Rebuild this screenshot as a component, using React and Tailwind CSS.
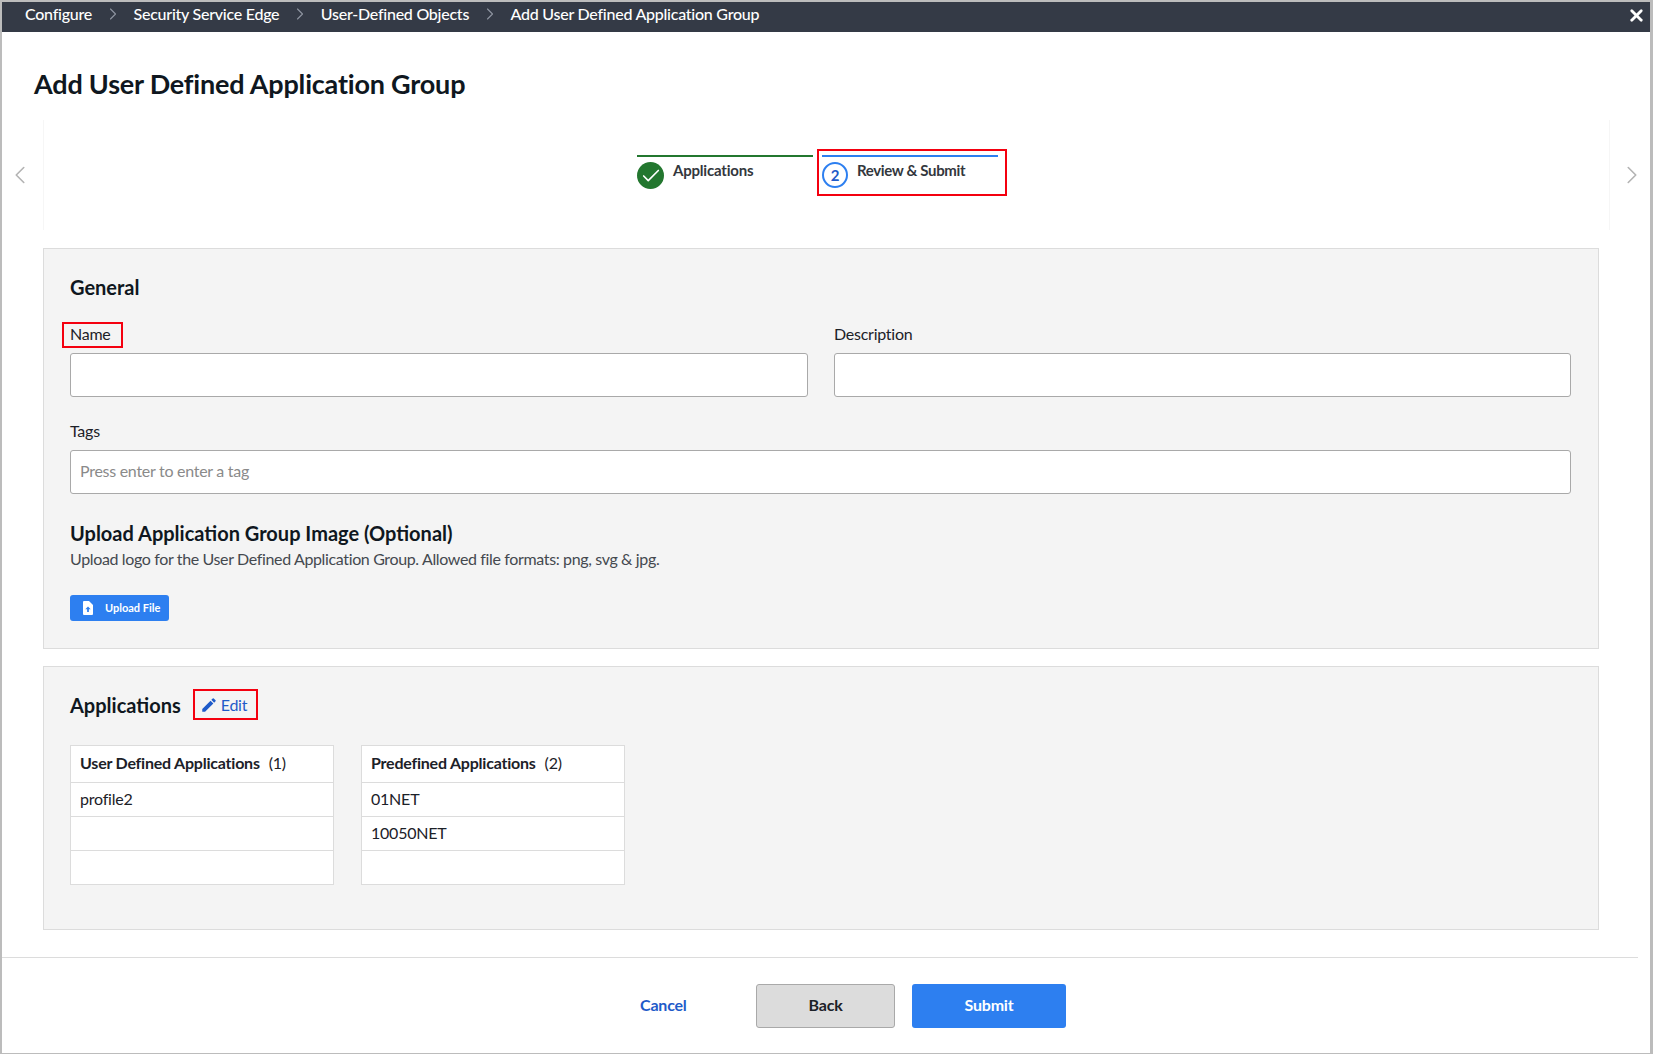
import { X, ChevronLeft, ChevronRight, Check } from "lucide-react";
import { MdEdit } from "react-icons/md";

const crumbs = ["Configure", "Security Service Edge", "User-Defined Objects", "Add User Defined Application Group"];

function Field({ label, placeholder, className = "" }) {
  return (
    <div className={className}>
      <label className="block text-[16px] leading-5 tracking-[-0.25px] text-[#1c2128]">{label}</label>
      <div className="mt-[9px] h-[44px] rounded-[3px] border border-[#a9a9a9] bg-white px-[9px] text-[16px] leading-[40px] tracking-[-0.28px] text-[#8a8a8a]">
        {placeholder}
      </div>
    </div>
  );
}

function AppTable({ title, count, rows }) {
  return (
    <div className="w-[264px] border border-[#dcdcdc] bg-white text-[16px] tracking-[-0.22px] text-[#1c2128]">
      <div className="flex h-[36px] items-center gap-[9px] px-[9px] pb-[2px]">
        <span className="font-bold">{title}</span>
        <span>({count})</span>
      </div>
      {rows.map((row, i) => (
        <div key={i} className="flex h-[34px] items-center border-t border-[#dcdcdc] px-[9px] pb-[2px]">
          {row}
        </div>
      ))}
    </div>
  );
}

export default function App() {
  return (
    <div className="flex h-[1054px] w-[1653px] flex-col overflow-hidden border-t-2 border-r-[3px] border-b border-l-2 border-[#bcbcbc] bg-white font-['Lato',sans-serif]">
      {/* top bar */}
      <div className="flex h-[30px] shrink-0 items-center bg-[#343a46] pr-[4px] pb-[7px] pl-[23px] text-[16px] font-medium tracking-[-0.25px] text-white">
        {crumbs.map((c, i) => (
          <div key={c} className="flex items-center">
            <span>{c}</span>
            {i < crumbs.length - 1 && <ChevronRight className="mx-[10.75px] h-[20px] w-[20px] text-[#8f95a0]" strokeWidth={1.3} />}
          </div>
        ))}
        <X className="mt-[3px] ml-auto h-[19px] w-[19px]" strokeWidth={3.5} />
      </div>

      <h1 className="mt-[34px] ml-[32px] h-[36px] text-[27px] leading-9 font-bold tracking-[-0.2px] text-[#0f1720]">Add User Defined Application Group</h1>

      {/* stepper */}
      <div className="mt-[18px] flex h-[110px]">
        <div className="flex w-[41px] shrink-0 items-center justify-center pr-[5px] text-[#b4b4b4]">
          <ChevronLeft className="h-[30px] w-[30px] shrink-0" strokeWidth={1.3} />
        </div>
        <div className="flex w-[1567px] shrink-0 gap-[9px] border-x border-[#f6f6f6] pt-[35px] pl-[593px]">
          <div className="w-[176px] border-t-2 border-[#23772f]">
            <div className="mt-[5px] flex gap-[9px]">
              <div className="flex h-[27px] w-[27px] items-center justify-center rounded-full bg-[#23772f]">
                <Check className="h-[22px] w-[22px] text-white" strokeWidth={1.8} />
              </div>
              <span className="-mt-px text-[15px] leading-[18px] font-bold tracking-[-0.2px] text-[#33373d]">Applications</span>
            </div>
          </div>
          <div className="relative w-[176px] border-t-2 border-[#2d7ff0]">
            <div className="absolute -top-[8px] -right-[9px] -left-[5px] h-[47px] border-2 border-[#f4000f]" />
            <div className="mt-[5px] flex gap-[9px]">
              <div className="flex h-[26px] w-[26px] items-center justify-center rounded-full border-2 border-[#2d7ff0] text-[15px] font-bold text-[#1f5bc9]">2</div>
              <span className="-mt-px text-[15px] leading-[18px] font-bold tracking-[-0.35px] text-[#33373d]">Review &amp; Submit</span>
            </div>
          </div>
        </div>
        <div className="flex w-[40px] shrink-0 items-center justify-center pl-[4px] text-[#b4b4b4]">
          <ChevronRight className="h-[30px] w-[30px] shrink-0" strokeWidth={1.3} />
        </div>
      </div>

      {/* general */}
      <section className="mt-[18px] ml-[41px] w-[1556px] border border-[#dcdcdc] bg-[#f4f4f4] pt-[24px] pr-[27px] pb-[27px] pl-[26px]">
        <h2 className="text-[20px] leading-7 font-bold text-[#0f1720]">General</h2>
        <div className="mt-[23px] flex gap-[26px]">
          <div className="relative w-[738px]">
            <div className="absolute -top-[2px] -left-[8px] h-[26px] w-[61px] border-2 border-[#f4000f]" />
            <Field label="Name" />
          </div>
          <Field label="Description" className="w-[737px]" />
        </div>
        <Field label="Tags" placeholder="Press enter to enter a tag" className="mt-[24px] w-[1501px]" />
        <h3 className="mt-[25px] text-[20px] leading-7 font-bold text-[#0f1720]">Upload Application Group Image (Optional)</h3>
        <p className="mt-[2px] text-[16px] leading-5 tracking-[-0.36px] text-[#44494f]">Upload logo for the User Defined Application Group. Allowed file formats: png, svg &amp; jpg.</p>
        <button className="mt-[26px] flex h-[26px] w-[99px] items-center gap-[12px] rounded-[3px] bg-[#2d7ff0] pl-[13px] text-[11px] font-bold text-white">
          <svg width="10" height="14" viewBox="0 0 10 14" className="shrink-0">
            <path fill="#fff" fillRule="evenodd" d="M1 0h5l4 4v9a1 1 0 0 1-1 1H1a1 1 0 0 1-1-1V1a1 1 0 0 1 1-1zm4 5.5L2.3 8.3h1.8V11h1.8V8.3h1.8z" />
          </svg>
          Upload File
        </button>
      </section>

      {/* applications */}
      <section className="mt-[17px] ml-[41px] w-[1556px] border border-[#dcdcdc] bg-[#f4f4f4] pt-[22px] pr-[27px] pb-[44px] pl-[26px]">
        <div className="flex items-center">
          <h2 className="text-[20px] leading-7 font-bold text-[#0f1720]">Applications</h2>
          <div className="ml-[12px] flex h-[31px] w-[65px] items-center gap-[3px] border-2 border-[#f4000f] pl-[5px] text-[16px] tracking-[-0.25px] text-[#1f5bc9]">
            <MdEdit className="h-[18px] w-[18px] shrink-0" />
            <span>Edit</span>
          </div>
        </div>
        <div className="mt-[25px] flex gap-[27px]">
          <AppTable title="User Defined Applications" count={1} rows={["profile2", "", ""]} />
          <AppTable title="Predefined Applications" count={2} rows={["01NET", "10050NET", ""]} />
        </div>
      </section>

      {/* footer */}
      <div className="mt-[27px] w-[1636px] border-t border-[#dcdcdc] pt-[26px] pl-[638px]">
        <div className="flex items-center text-[16px] font-bold tracking-[-0.2px]">
          <span className="w-[116px] pb-[2px] text-[#1f5bc9]">Cancel</span>
          <button className="h-[44px] w-[139px] rounded-[3px] border border-[#a9a9a9] bg-[#dcdcdc] pb-[2px] text-[#1c2128]">Back</button>
          <button className="ml-[17px] h-[44px] w-[154px] rounded-[3px] bg-[#2d7ff0] pb-[2px] text-white">Submit</button>
        </div>
      </div>
    </div>
  );
}
